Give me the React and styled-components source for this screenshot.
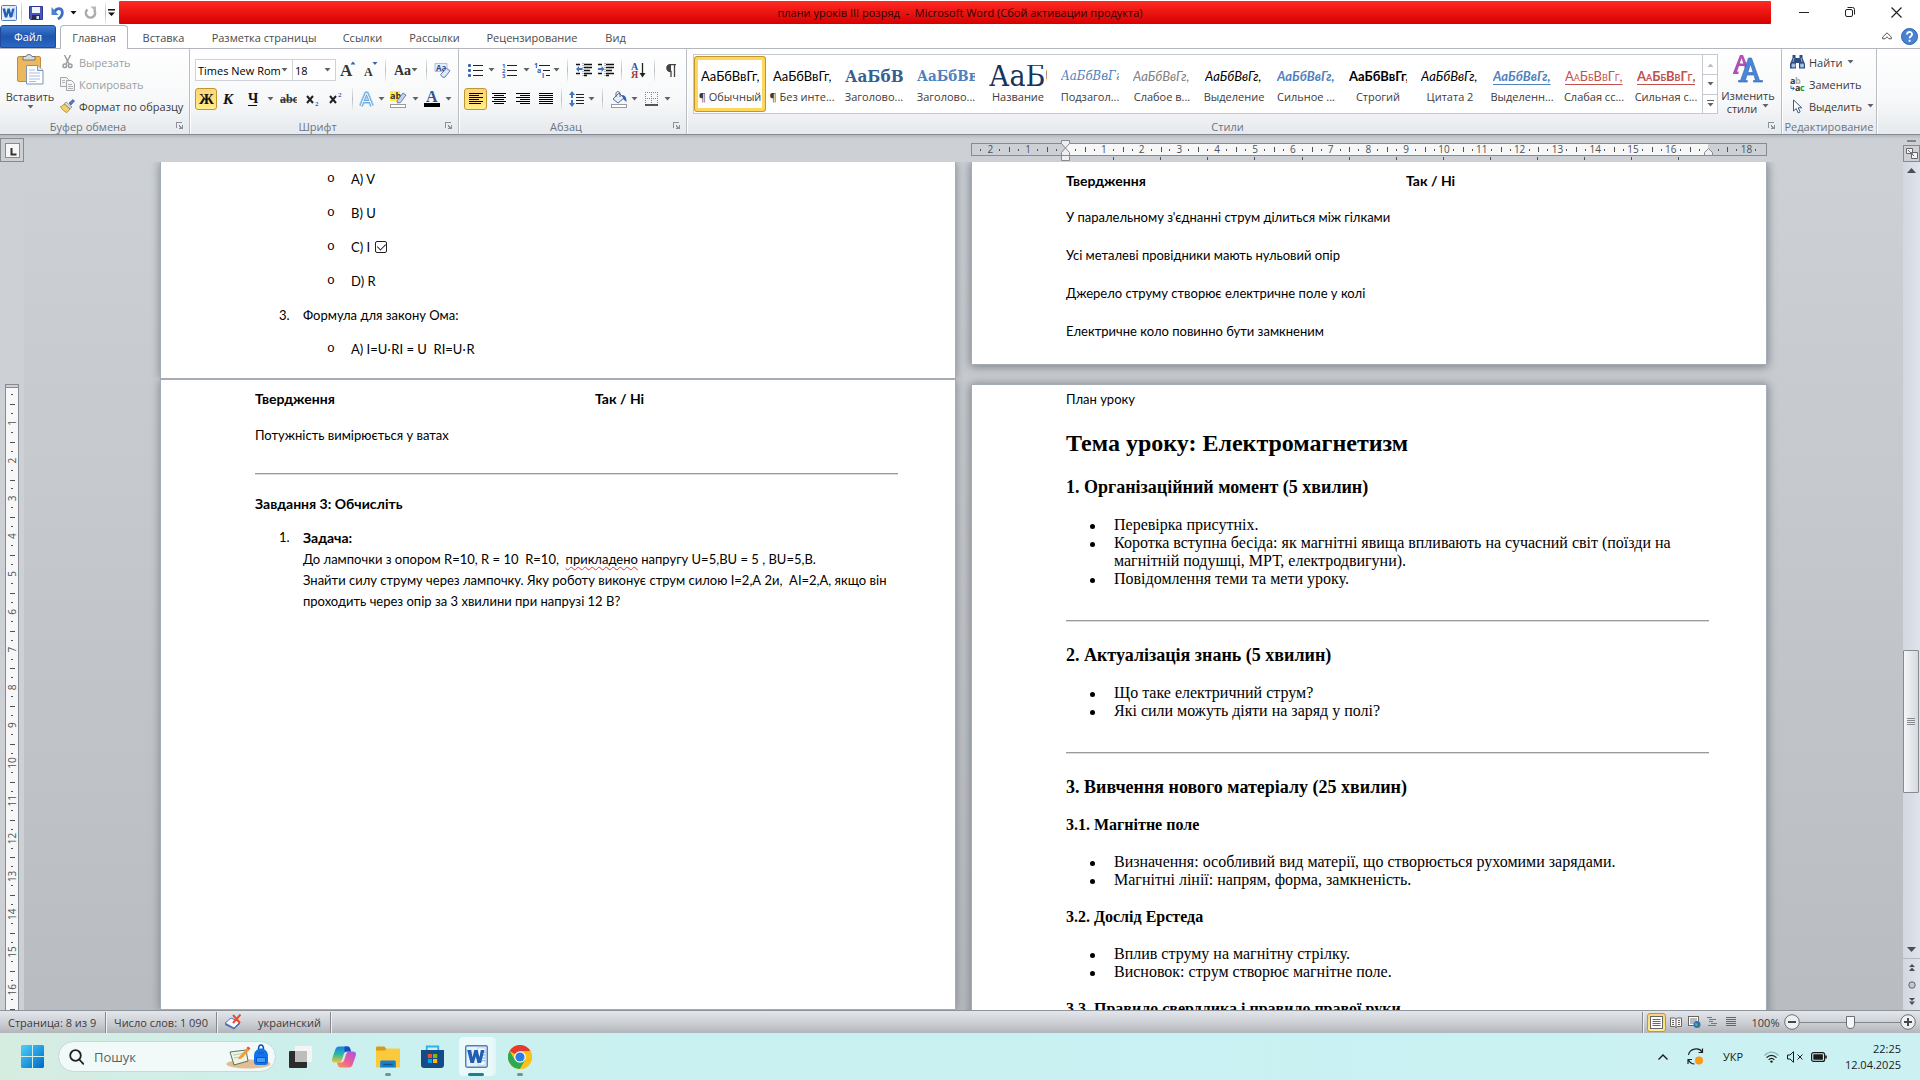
import React from 'react';
import styled, { createGlobalStyle, css } from 'styled-components';

const UI_FONT = '"Open Sans", "Noto Sans", sans-serif';
const BODY_FONT = 'Lato, "Open Sans", sans-serif';
const HEAD_FONT = '"DejaVu Serif Condensed", "DejaVu Serif", serif';

const GlobalStyle = createGlobalStyle`
  * {
    box-sizing: border-box;
  }

  body {
    margin: 0;
    overflow: hidden;
    font-family: ${UI_FONT};
    font-size: 11px;
    color: #3b3b3b;
  }

  button, select, input {
    margin: 0;
    padding: 0;
    border: 0;
    background: none;
    color: inherit;
    font: inherit;
  }

  svg {
    display: block;
    flex: none;
  }
`;

const Window = styled.div`
  display: flex;
  flex-direction: column;
  height: 100vh;
  background: #fff;
`;

/* ---------- small shared pieces ---------- */

const Caret = ({ color = '#5f6368' }) => (
  <svg width="7" height="4" viewBox="0 0 7 4">
    <path d="M0.5 0h6L3.5 3.6z" fill={color} />
  </svg>
);

const selected = css`
  border: 1px solid #c2962f;
  border-radius: 3px;
  background: linear-gradient(#fbd57a, #ffe27a 60%, #fff08c);
`;

const Tool = styled.button`
  display: flex;
  flex: none;
  align-items: center;
  justify-content: center;
  width: ${({ $w }) => $w}px;
  height: 22px;
  ${({ $on }) => $on && selected}
`;

const Divider = styled.span`
  display: flex;
  flex: none;
  justify-content: center;
  width: ${({ $w }) => $w}px;
  height: 22px;

  &::before {
    content: '';
    width: 1px;
    background: linear-gradient(#eceef0, #b9bdc3, #eceef0);
  }
`;

const Drop = () => (
  <Tool $w={9} aria-label="Ещё">
    <Caret />
  </Tool>
);

const Lines = ({ rows, w = 14, step = 2, color = '#000' }) => (
  <svg width={w} height={rows.length * step} shapeRendering="crispEdges">
    {rows.map(([x, len], i) => (
      <rect key={i} x={x} y={i * step} width={len} height="1" fill={color} />
    ))}
  </svg>
);

/* ---------- title bar ---------- */

const TitleBar = styled.header`
  display: flex;
  height: 24px;
  padding-top: 1px;
`;

const QuickAccess = styled.div`
  display: flex;
  align-items: center;
  width: 119px;
  padding: 0 1px;
`;

const Caption = styled.div`
  flex: 1;
  padding-left: 30px;
  border-radius: 1px;
  background: linear-gradient(#ff2a22, #d60000);
  color: #2b0505;
  line-height: 23px;
  text-align: center;
  white-space: pre;
`;

const WindowButtons = styled.div`
  display: flex;
  padding: 0 1px 0 10px;
`;

const WordLogo = ({ size = 16 }) => (
  <svg width={size} height={size} viewBox="0 0 16 16">
    <rect x="0.5" y="0.5" width="15" height="15" rx="1" fill="#e8f1fb" stroke="#4f7fc0" />
    <path d="M9 2h5v12H9z" fill="#fff" stroke="#a9c4e6" strokeWidth="0.5" />
    <path d="M11 5h3M11 7h3M11 9h3M11 11h3" stroke="#7ba4d8" strokeWidth="0.7" />
    <path
      d="M1.500 3.500h2.800l.9 5L6.500 3.500h2.300l1.200 5 1-5h2.500L11.200 12.500H8.700L7.500 8l-1.300 4.500H3.800z"
      fill="#1f5fb4"
    />
  </svg>
);

const TitleRow = () => (
  <TitleBar>
    <QuickAccess>
      <WordLogo />
      <Divider $w={9} />
      <Tool $w={20} aria-label="Сохранить">
        <svg width="14" height="14" viewBox="0 0 14 14">
          <path d="M0.5 0.5h13v13h-12l-1-1z" fill="#4a56c0" stroke="#2c3791" />
          <path d="M3 1h8v6H3z" fill="#f1f4fb" />
          <path d="M3 9h8v4.500H3z" fill="#262c50" />
          <path d="M7.500 10h2.500v3H7.500z" fill="#dfe3f2" />
        </svg>
      </Tool>
      <Tool $w={23} aria-label="Отменить">
        <svg width="14" height="14" viewBox="0 0 14 14">
          <path d="M3.500 6C5.500 1.500 11 1.500 11.300 6c.2 3.500-1.800 5.500-4.300 7" fill="none" stroke="#3f6fc4" strokeWidth="2.800" />
          <path d="M0.500 1v8h7z" fill="#4f80d2" />
        </svg>
      </Tool>
      <Tool $w={8} aria-label="Список отмены">
        <Caret color="#111" />
      </Tool>
      <Tool $w={26} aria-label="Повторить">
        <svg width="13" height="14" viewBox="0 0 13 14">
          <path d="M3.500 3.500A4.600 4.600 0 1 0 10 4" fill="none" stroke="#a8abb0" strokeWidth="2.500" />
          <path d="M6.500 0.500H12V6z" fill="#b4b7bb" />
        </svg>
      </Tool>
      <Divider $w={4} />
      <Tool $w={9} aria-label="Настройка панели">
        <svg width="7" height="8" viewBox="0 0 7 8">
          <path d="M0 0h7v1.500H0zM0 3.500h7L3.500 7z" fill="#111" />
        </svg>
      </Tool>
    </QuickAccess>
    <Caption>{'плани уроків III розряд  -  Microsoft Word (Сбой активации продукта)'}</Caption>
    <WindowButtons>
      <Tool $w={46} aria-label="Свернуть">
        <svg width="10" height="2"><path d="M0 1.500h10" stroke="#222" /></svg>
      </Tool>
      <Tool $w={46} aria-label="Свернуть в окно">
        <svg width="10" height="10" fill="none" stroke="#222">
          <rect x="0.5" y="2.5" width="7" height="7" rx="1.500" />
          <path d="M2.500 0.500H7.500a2 2 0 0 1 2 2V7.500" />
        </svg>
      </Tool>
      <Tool $w={46} aria-label="Закрыть">
        <svg width="11" height="11"><path d="M0.500 0.500l10 10M10.500 0.500l-10 10" stroke="#222" strokeWidth="1.200" /></svg>
      </Tool>
    </WindowButtons>
  </TitleBar>
);

/* ---------- tabs ---------- */

const TabBar = styled.nav`
  display: flex;
  height: 25px;
  padding-top: 1px;
  border-bottom: 1px solid #b2b7bd;
`;

const Tab = styled.button`
  width: ${({ $w }) => $w}px;
  height: 24px;
  color: #4b4b4b;
  text-align: center;
`;

const FileTab = styled(Tab)`
  height: 23px;
  margin-right: 4px;
  border: 1px solid #1f4a99;
  border-radius: 3px 3px 0 0;
  background: linear-gradient(#3f7cd4, #1f55ad 50%, #2b68c6);
  color: #fff;
`;

const ActiveTab = styled(Tab)`
  border: 1px solid #b2b7bd;
  border-bottom: 0;
  border-radius: 4px 4px 0 0;
  background: #fff;
`;

const TabSpace = styled.div`
  flex: 1;
`;

const TABS = [
  ['Вставка', 71],
  ['Разметка страницы', 130],
  ['Ссылки', 67],
  ['Рассылки', 77],
  ['Рецензирование', 118],
  ['Вид', 49],
];

const Tabs = () => (
  <TabBar>
    <FileTab $w={56}>Файл</FileTab>
    <ActiveTab $w={68}>Главная</ActiveTab>
    {TABS.map(([name, w]) => (
      <Tab key={name} $w={w}>{name}</Tab>
    ))}
    <TabSpace />
    <Tool $w={22} aria-label="Свернуть ленту">
      <svg width="10" height="8" viewBox="0 0 10 8" fill="none" stroke="#555">
        <path d="M0.700 5L5 0.800 9.300 5v1.800H7L5 4.800 3 6.800H0.700z" />
      </svg>
    </Tool>
    <Tool $w={22} aria-label="Справка">
      <svg width="17" height="17" viewBox="0 0 17 17">
        <circle cx="8.5" cy="8.5" r="8" fill="#4a82d2" stroke="#2f62ad" />
        <path d="M6 6.500c0-3.500 5.200-3.200 5 0-.1 1.800-2.400 1.800-2.400 3.800M8.600 11.700v2" fill="none" stroke="#fff" strokeWidth="1.900" />
      </svg>
    </Tool>
  </TabBar>
);

/* ---------- ribbon ---------- */

const Ribbon = styled.section`
  display: flex;
  height: 86px;
  border-bottom: 1px solid #868b92;
  background: linear-gradient(#fff, #f7f8f9 60%, #e6e9ed);
`;

const GroupBox = styled.div`
  display: flex;
  flex: none;
  flex-direction: column;
  width: ${({ $w }) => $w}px;
  border-right: 1px solid #b9bec5;
  box-shadow: 1px 0 0 #fff;
`;

const GroupBody = styled.div`
  display: flex;
  height: 69px;
`;

const GroupCaption = styled.div`
  display: flex;
  align-items: center;
  height: 16px;
  color: #6c7380;

  span {
    flex: 1;
    text-align: center;
  }

  button {
    width: 13px;
  }
`;

const Group = ({ name, width, launcher = true, children }) => (
  <GroupBox $w={width}>
    <GroupBody>{children}</GroupBody>
    <GroupCaption>
      <span>{name}</span>
      {launcher && (
        <button aria-label={`${name}: параметры`}>
          <svg width="8" height="8" viewBox="0 0 8 8" shapeRendering="crispEdges">
            <path d="M0 0h6v1H1v5H0zM3 3h1v1h1v1h1V3h1v4H3V6h1V5H3z" fill="#8b9098" />
          </svg>
        </button>
      )}
    </GroupCaption>
  </GroupBox>
);

const BigButton = styled.button`
  display: flex;
  flex: none;
  flex-direction: column;
  align-items: center;
  width: 60px;
  padding-top: 5px;
  line-height: 13px;

  svg:first-child {
    margin-bottom: 5px;
  }
`;

const CaretLabel = styled.span`
  display: flex;
  align-items: center;
  gap: 5px;
  height: 13px;
`;

const Stack = styled.div`
  display: flex;
  flex-direction: column;
  padding: 2px 0 0 ${({ $pad }) => $pad || 0}px;
`;

const SmallButton = styled.button`
  display: flex;
  align-items: center;
  gap: 4px;
  height: 22px;
  color: ${({ disabled }) => (disabled ? '#9c9fa3' : 'inherit')};
  white-space: nowrap;
`;

const IconSlot = styled.span`
  display: flex;
  justify-content: center;
  width: 15px;
`;

const Rows = styled.div`
  display: flex;
  flex-direction: column;
  gap: 7px;
  padding: 10px 0 0 5px;
`;

const ToolRow = styled.div`
  display: flex;
  align-items: center;
  height: 22px;
`;

const Combo = styled.label`
  display: flex;
  align-items: center;
  width: ${({ $w }) => $w}px;
  height: 22px;
  padding: 0 4px 0 2px;
  border: 1px solid #cfd3d8;
  background: #fff;
  color: #000;

  & + & {
    border-left: 0;
  }

  select {
    flex: 1;
    min-width: 0;
    appearance: none;
    outline: 0;
  }
`;

const Clipboard = () => (
  <Group name="Буфер обмена" width={190}>
    <BigButton>
      <svg width="27" height="31" viewBox="0 0 27 31">
        <rect x="0.5" y="2.5" width="23" height="25" rx="1.500" fill="#edb75e" stroke="#c58c34" />
        <path d="M6 6V2.500h3C9 0 15 0 15 2.500h3V6z" fill="#d9dde2" stroke="#6d747d" />
        <path d="M9.500 11.500h11l5.500 5V30H9.500z" fill="#fff" stroke="#7d94b8" />
        <path d="M20.500 11.500v5H26" fill="#dbe6f5" stroke="#7d94b8" />
        <path d="M12 16h6M12 19h11M12 22h11M12 25h11M12 27.500h7" stroke="#a9bcd8" />
      </svg>
      <span>Вставить</span>
      <CaretLabel><Caret /></CaretLabel>
    </BigButton>
    <Stack>
      <SmallButton disabled>
        <IconSlot>
          <svg width="11" height="14" viewBox="0 0 11 14" fill="none" stroke="#9a9da2" strokeWidth="1.500">
            <path d="M2.500 0l4.500 9M8.500 0L4 9" />
            <circle cx="2.800" cy="10.800" r="1.800" />
            <circle cx="8.200" cy="10.800" r="1.800" />
          </svg>
        </IconSlot>
        Вырезать
      </SmallButton>
      <SmallButton disabled>
        <IconSlot>
          <svg width="15" height="14" viewBox="0 0 15 14" fill="#f4f4f4" stroke="#a2a5aa">
            <path d="M0.500 0.500h6l2 2v7h-8z" />
            <path d="M6.500 3.500h5l3 3v7h-8z" />
            <path d="M8 7.500h4M8 9.500h5M8 11.500h5M2 3.500h3M2 5.500h3" strokeWidth="0.800" />
          </svg>
        </IconSlot>
        Копировать
      </SmallButton>
      <SmallButton>
        <IconSlot>
          <svg width="15" height="14" viewBox="0 0 15 14">
            <path d="M9 4l4-3.500L14.500 2 11 6z" fill="#5b78b8" stroke="#31487f" strokeWidth="0.600" />
            <path d="M6 3l6 5-2 2-6-5z" fill="#d6d9de" stroke="#6b6f78" strokeWidth="0.600" />
            <path d="M4 5l6 5-3 3.500C5 13 2 11 0.500 7.500 2 7.500 3 6.500 4 5z" fill="#f2d266" stroke="#96762a" strokeWidth="0.700" />
          </svg>
        </IconSlot>
        Формат по образцу
      </SmallButton>
    </Stack>
  </Group>
);

const SerifGlyph = ({ w, children }) => (
  <svg width={w} height="20" fontFamily="Liberation Serif, serif" fontWeight="bold" fill="#333">
    {children}
  </svg>
);

const FontGroup = () => (
  <Group name="Шрифт" width={269}>
    <Rows>
      <ToolRow>
        <Combo $w={98}>
          <select aria-label="Шрифт" defaultValue="Times New Rom">
            <option>Times New Rom</option>
            <option>Calibri</option>
          </select>
          <Caret />
        </Combo>
        <Combo $w={43}>
          <select aria-label="Размер шрифта" defaultValue="18">
            <option>18</option>
            <option>12</option>
          </select>
          <Caret />
        </Combo>
        <Tool $w={24} aria-label="Увеличить размер">
          <SerifGlyph w={16}>
            <text x="0" y="16" fontSize="17">A</text>
            <path d="M10.500 4.500h5L13 1.500z" fill="#3563b0" />
          </SerifGlyph>
        </Tool>
        <Tool $w={22} aria-label="Уменьшить размер">
          <SerifGlyph w={14}>
            <text x="0" y="16" fontSize="12">A</text>
            <path d="M8.500 2h5L11 5z" fill="#3563b0" />
          </SerifGlyph>
        </Tool>
        <Divider $w={6} />
        <Tool $w={35} aria-label="Регистр">
          <SerifGlyph w={17}>
            <text x="0" y="15" fontSize="14">Aa</text>
          </SerifGlyph>
          <Caret />
        </Tool>
        <Divider $w={6} />
        <Tool $w={27} aria-label="Очистить формат">
          <svg width="17" height="17" viewBox="0 0 17 17">
            <path d="M1 1.500h12v8H1z" fill="#e9f0fa" stroke="#8fa9d2" strokeWidth="0.700" />
            <text x="2" y="8.500" fontSize="8" fontWeight="bold" fill="#2b4f93">Aa</text>
            <path d="M6.500 12.500l6-6 3.500 2.200-5 6.500H8.500z" fill="#dfe8f5" stroke="#5c7fb9" />
          </svg>
        </Tool>
      </ToolRow>
      <ToolRow>
        <Tool $w={22} $on aria-label="Полужирный">
          <SerifGlyph w={16}><text x="1" y="15" fontSize="15" fill="#111">Ж</text></SerifGlyph>
        </Tool>
        <Tool $w={24} aria-label="Курсив">
          <SerifGlyph w={14}><text x="1" y="15" fontSize="15" fontStyle="italic" fill="#111">К</text></SerifGlyph>
        </Tool>
        <Tool $w={24} aria-label="Подчеркнутый">
          <SerifGlyph w={12}>
            <text x="1" y="14" fontSize="14" fill="#111">Ч</text>
            <path d="M1 16.500h9" stroke="#111" />
          </SerifGlyph>
        </Tool>
        <Tool $w={11} aria-label="Вид подчеркивания"><Caret /></Tool>
        <Tool $w={25} aria-label="Зачеркнутый">
          <SerifGlyph w={17}>
            <text x="0" y="14" fontSize="12">abc</text>
            <path d="M0 11h17" stroke="#333" />
          </SerifGlyph>
        </Tool>
        <Tool $w={23} aria-label="Подстрочный">
          <SerifGlyph w={14}>
            <path d="M1 7l6 7M7 7l-6 7" stroke="#222" strokeWidth="2" />
            <text x="9" y="17" fontSize="7" fill="#2f62b5">2</text>
          </SerifGlyph>
        </Tool>
        <Tool $w={24} aria-label="Надстрочный">
          <SerifGlyph w={14}>
            <path d="M1 7l6 7M7 7l-6 7" stroke="#222" strokeWidth="2" />
            <text x="9" y="8" fontSize="7" fill="#2f62b5">2</text>
          </SerifGlyph>
        </Tool>
        <Divider $w={8} />
        <Tool $w={21} aria-label="Текстовые эффекты">
          <svg width="17" height="17" viewBox="0 0 17 17" fill="none" strokeLinejoin="round">
            <path d="M3 15L8 2.500h1L14 15M5 10.500h7" stroke="#a5cdee" strokeWidth="4.500" />
            <path d="M3 15L8 2.500h1L14 15M5 10.500h7" stroke="#5a9fd8" strokeWidth="2.600" />
            <path d="M3 15L8 2.500h1L14 15M5 10.500h7" stroke="#eaf5fd" strokeWidth="1.200" />
          </svg>
        </Tool>
        <Drop />
        <Tool $w={25} aria-label="Цвет выделения">
          <svg width="17" height="17" viewBox="0 0 17 17">
            <rect x="0" y="0" width="10" height="10" fill="#ffee3d" />
            <text x="0" y="8" fontSize="9" fontWeight="bold" fill="#333">ab</text>
            <path d="M7 10l6-8 3 2-5.500 7.500-3 .5z" fill="#c8d4e8" stroke="#51688f" strokeWidth="0.800" />
            <rect x="0.500" y="13.500" width="15" height="3" fill="#fff" stroke="#9a9a9a" />
          </svg>
        </Tool>
        <Drop />
        <Tool $w={24} aria-label="Цвет текста">
          <SerifGlyph w={16}>
            <text x="2" y="13" fontSize="16" fill="#2f5597">A</text>
            <rect x="0" y="14" width="16" height="4" fill="#000" />
          </SerifGlyph>
        </Tool>
        <Drop />
      </ToolRow>
    </Rows>
  </Group>
);

const ListIcon = ({ marks }) => (
  <svg width="15" height="15" viewBox="0 0 15 15">
    {[2, 7, 12].map((y, i) => (
      <g key={y}>
        {marks ? (
          <text x="0" y={y + 3} fontSize="6" fontWeight="bold" fill="#2f5fb8">{marks[i]}</text>
        ) : (
          <rect x="0" y={y - 1} width="3" height="3" rx="1" fill="#3563b8" />
        )}
        <rect x="5" y={y} width="10" height="1" fill="#222" />
      </g>
    ))}
  </svg>
);

const IndentIcon = ({ flip }) => (
  <svg width="16" height="14" viewBox="0 0 16 14">
    <path d="M0 1.500h4M8 1.500h8M8 4.500h8M8 7.500h6M0 10.500h4M8 10.500h8M8 12.500h3" stroke="#111" strokeWidth="1.400" />
    <path d={flip ? 'M6.500 6L3.500 3v2H0v2h3.500v2z' : 'M0 6l3-3v2h3.500v2H3v2z'} fill="#3f74c8" />
    <path d="M7 0v14" stroke="#777" strokeDasharray="1 1" />
  </svg>
);

const LEFT = [[0, 14], [0, 10], [0, 14], [0, 10], [0, 14], [0, 12]];
const CENTER = [[0, 14], [2, 10], [0, 14], [2, 10], [0, 14], [2, 10]];
const RIGHT = [[0, 14], [4, 10], [0, 14], [4, 10], [0, 14], [4, 10]];
const FULL = [[0, 14], [0, 14], [0, 14], [0, 14], [0, 14], [0, 14]];

const ParagraphGroup = () => (
  <Group name="Абзац" width={228}>
    <Rows>
      <ToolRow>
        <Tool $w={23} aria-label="Маркеры"><ListIcon /></Tool>
        <Drop />
        <Tool $w={26} aria-label="Нумерация"><ListIcon marks={['1', '2', '3']} /></Tool>
        <Drop />
        <Tool $w={21} aria-label="Многоуровневый список">
          <svg width="16" height="15" viewBox="0 0 16 15" fontSize="7" fontWeight="bold" fill="#2f5fb8">
            <text x="0" y="5">1</text>
            <text x="3" y="10">a</text>
            <text x="8" y="15">i</text>
            <path d="M5 2.500h11M9 7.500h7M12 12.500h4" stroke="#222" />
          </svg>
        </Tool>
        <Drop />
        <Divider $w={12} />
        <Tool $w={22} aria-label="Уменьшить отступ"><IndentIcon /></Tool>
        <Tool $w={22} aria-label="Увеличить отступ"><IndentIcon flip /></Tool>
        <Divider $w={9} />
        <Tool $w={24} aria-label="Сортировка">
          <svg width="15" height="17" viewBox="0 0 15 17" fontFamily="Liberation Serif, serif" fontSize="10" fontWeight="bold">
            <text x="0" y="8" fill="#2f5597">А</text>
            <text x="0" y="16" fill="#a03a3a">Я</text>
            <path d="M11.500 1v12" stroke="#222" strokeWidth="1.300" />
            <path d="M8.500 11h6l-3 4.500z" fill="#222" />
          </svg>
        </Tool>
        <Divider $w={8} />
        <Tool $w={26} aria-label="Непечатаемые знаки">
          <svg width="10" height="13" viewBox="0 0 10 13">
            <path d="M10 0.500H4.500a3.500 3.500 0 0 0 0 7H5V13M8.500 0.500V13" fill="none" stroke="#444" strokeWidth="1.300" />
            <path d="M5 0.500H4a3.500 3.500 0 0 0 0 7h1z" fill="#444" />
          </svg>
        </Tool>
      </ToolRow>
      <ToolRow>
        <Tool $w={23} $on aria-label="По левому краю"><Lines rows={LEFT} /></Tool>
        <Tool $w={24} aria-label="По центру"><Lines rows={CENTER} /></Tool>
        <Tool $w={24} aria-label="По правому краю"><Lines rows={RIGHT} /></Tool>
        <Tool $w={22} aria-label="По ширине"><Lines rows={FULL} /></Tool>
        <Divider $w={9} />
        <Tool $w={21} aria-label="Интервал">
          <svg width="15" height="16" viewBox="0 0 15 16">
            <path d="M3 0l3 4H4v3H2V4H0zM3 16l3-4H4V9H2v3H0z" fill="#3f74c8" />
            <path d="M7 3.500h8M7 6.500h8M7 9.500h8M7 12.500h8" stroke="#222" />
          </svg>
        </Tool>
        <Drop />
        <Divider $w={12} />
        <Tool $w={22} aria-label="Заливка">
          <svg width="16" height="17" viewBox="0 0 16 17">
            <path d="M2 8l6-6 5 5-6 5z" fill="#e6edf8" stroke="#4a6ea8" />
            <path d="M5 6V2.500C5 0 9 0 9 2.500V6" fill="none" stroke="#4a5c7c" />
            <path d="M11 4c3 0 4.500 2 4.500 7l-3-2.500z" fill="#3563b0" />
            <rect x="0.500" y="13.500" width="15" height="3" fill="#fff" stroke="#9a9a9a" />
          </svg>
        </Tool>
        <Drop />
        <Tool $w={24} aria-label="Границы">
          <svg width="13" height="14" viewBox="0 0 13 14">
            <path d="M0 0.500h13M0 6.500h13M0.500 0v13M6.500 0v13M12.500 0v13" stroke="#888" strokeDasharray="1 1" />
            <path d="M0 13h13" stroke="#222" strokeWidth="1.500" />
          </svg>
        </Tool>
        <Drop />
      </ToolRow>
    </Rows>
  </Group>
);

const Gallery = styled.div`
  display: flex;
  flex: none;
  height: 60px;
  margin: 5px 0 0 6px;
  border: 1px solid #c6cad0;
  background: #fff;
`;

const StyleCard = styled.button`
  display: flex;
  flex-direction: column;
  align-items: center;
  width: 72px;
  height: 56px;
  margin-top: 1px;
  padding-top: 5px;
  border: 4px solid transparent;
  white-space: nowrap;

  ${({ $on }) =>
    $on &&
    css`
      border: 4px solid #ffd65c;
      border-radius: 3px;
      outline: 1px solid #c2962f;
      outline-offset: -1px;
    `}
`;

const Sample = styled.span`
  width: 58px;
  height: 24px;
  overflow: hidden;
  color: ${({ $color }) => $color || '#000'};
  font-family: ${({ $head }) => ($head ? HEAD_FONT : BODY_FONT)};
  font-size: ${({ $size }) => $size || 13}px;
  font-style: ${({ $italic }) => ($italic ? 'italic' : 'normal')};
  font-weight: ${({ $bold }) => ($bold ? 700 : 400)};
  font-variant: ${({ $caps }) => ($caps ? 'small-caps' : 'normal')};
  line-height: 22px;
  text-align: left;
  text-decoration: ${({ $line }) => ($line ? 'underline' : 'none')};
  text-underline-offset: 3px;
`;

const StyleName = styled.span`
  line-height: 16px;
`;

const STYLES = [
  { name: '¶ Обычный', on: true },
  { name: '¶ Без инте...' },
  { name: 'Заголово...', head: true, bold: true, size: 17, color: '#365f91' },
  { name: 'Заголово...', head: true, bold: true, size: 15, color: '#4f81bd' },
  { name: 'Название', head: true, size: 30, color: '#17365d' },
  { name: 'Подзагол...', head: true, italic: true, color: '#4f81bd' },
  { name: 'Слабое в...', italic: true, color: '#808080' },
  { name: 'Выделение', italic: true },
  { name: 'Сильное ...', italic: true, bold: true, color: '#4f81bd' },
  { name: 'Строгий', bold: true },
  { name: 'Цитата 2', italic: true },
  { name: 'Выделенн...', italic: true, bold: true, line: true, color: '#4f81bd' },
  { name: 'Слабая сс...', caps: true, line: true, color: '#c0504d' },
  { name: 'Сильная с...', caps: true, bold: true, line: true, color: '#c0504d' },
];

const GalleryScroll = styled.div`
  display: grid;
  grid-template-rows: 1fr 1fr 1fr;
  width: 15px;
  border-left: 1px solid #c6cad0;

  button {
    display: flex;
    align-items: center;
    justify-content: center;
  }

  button + button {
    border-top: 1px solid #c6cad0;
  }
`;

const StylesGroup = () => (
  <Group name="Стили" width={1095}>
    <Gallery>
      {STYLES.map((s, i) => (
        <StyleCard key={i} $on={s.on}>
          <Sample
            $head={s.head}
            $bold={s.bold}
            $italic={s.italic}
            $caps={s.caps}
            $line={s.line}
            $size={s.size}
            $color={s.color}
          >
            АаБбВвГг,
          </Sample>
          <StyleName>{s.name}</StyleName>
        </StyleCard>
      ))}
      <GalleryScroll>
        <button aria-label="Вверх">
          <svg width="7" height="4"><path d="M0.500 4h6L3.500 0.400z" fill="#b9bdc2" /></svg>
        </button>
        <button aria-label="Вниз"><Caret /></button>
        <button aria-label="Все стили">
          <svg width="7" height="7"><path d="M0 0h7v1H0zM0.500 3h6L3.500 6.600z" fill="#5f6368" /></svg>
        </button>
      </GalleryScroll>
    </Gallery>
    <BigButton>
      <svg width="30" height="30" viewBox="0 0 30 30">
        <path d="M0 19L7 1h3l6 15h-3.500l-1.300-4H6l-2 5.500h1.500V20H0zM6.800 9.500h3.600L8.500 4z" fill="#b14fb6" />
        <path d="M5.500 28v-1.500h2L15.500 4h3l8 22.500h3V28h-9v-1.500h2L21 21h-7l-1.700 5.500h2V28zM14.800 18.500h5.400L17.500 10z" fill="#4b86d8" stroke="#2d5fae" strokeWidth="0.600" />
      </svg>
      <span>Изменить</span>
      <CaretLabel>стили <Caret /></CaretLabel>
    </BigButton>
  </Group>
);

const EditGroup = () => (
  <Group name="Редактирование" width={95} launcher={false}>
    <Stack $pad={8}>
      <SmallButton>
        <svg width="15" height="14" viewBox="0 0 15 14">
          <path d="M2.500 0h3v3h4V0h3v3l2.500 6v4.500H9V8H6v5.500H0V9l2.500-6z" fill="#2f4d80" />
          <path d="M2 9h3v3H2zM10.500 9h3v3h-3zM4 3l-1 4M11 3l1 4" fill="#b8cdec" stroke="#8fb0de" />
        </svg>
        <CaretLabel>Найти <Caret /></CaretLabel>
      </SmallButton>
      <SmallButton>
        <svg width="15" height="15" viewBox="0 0 15 15" fontSize="9" fontWeight="bold">
          <text x="0" y="7" fill="#333">a</text>
          <text x="5" y="7" fill="#aaa">b</text>
          <text x="5" y="14" fill="#333">a</text>
          <text x="10" y="14" fill="#2a8c3c">c</text>
          <path d="M1 8.500v3h3M2.500 10l2 1.500-2 1.500" fill="none" stroke="#3563b0" />
        </svg>
        Заменить
      </SmallButton>
      <SmallButton>
        <svg width="15" height="15" viewBox="0 0 15 15">
          <path d="M3.500 1v11l2.700-2.500 2 4.500 2-1-2-4.200h3.600z" fill="#fff" stroke="#3c5a8c" />
        </svg>
        <CaretLabel>Выделить <Caret /></CaretLabel>
      </SmallButton>
    </Stack>
  </Group>
);

/* ---------- rulers ---------- */

const CM = 37.8;

const RulerBar = styled.div`
  display: flex;
  height: 27px;
  background: #cdd1d6;
  box-shadow: inset 0 3px 3px -1px #b3b8be;
`;

const Corner = styled.button`
  display: flex;
  align-items: center;
  justify-content: center;
  width: 24px;
  height: 24px;
  margin-top: 3px;
  border: 1px solid #868b92;

  svg {
    border: 1px solid #868b92;
    background: #f7f7f8;
  }
`;

const Sheets = styled.div`
  display: flex;
  flex: 1;
  justify-content: center;
  gap: 15px;
  min-width: 0;
  overflow: hidden;
`;

const SheetWidth = styled.div`
  width: 796px;
`;

const range = (from, to) => Array.from({ length: to - from + 1 }, (_, i) => from + i);

const HorizontalRuler = () => (
  <svg width="796" height="27" fontSize="10" fill="#4c5258" textAnchor="middle">
    <rect x="0.500" y="8.500" width="795" height="12" fill="#cdd1d6" stroke="#868b92" />
    <rect x="95" y="9" width="642" height="11" fill="#f7f7f8" />
    {range(-2, 18).map((n) => {
      const x = 95 + n * CM;
      return (
        <g key={n}>
          {n !== 0 && n !== 17 && <text x={x} y="18">{Math.abs(n)}</text>}
          <rect x={Math.round(x - 10)} y="14" width="1" height="2" />
          <rect x={Math.round(x + 9)} y="14" width="1" height="2" />
          {n !== 18 && <rect x={Math.round(x + CM / 2)} y="12" width="1" height="5" />}
        </g>
      );
    })}
    {range(1, 13).map((n) => (
      <rect key={n} x={Math.round(95 + n * 47.1)} y="22" width="1" height="3" />
    ))}
    <g fill="#f0f0f0" stroke="#868b92">
      <path d="M90.500 5.500h8v3l-4 4.500-4-4.500zM94.500 13l4 4.500v3h-8v-3zM90.500 20.500h8v5h-8z" />
      <path d="M737.500 13.500l4 4v3h-8v-3z" />
    </g>
  </svg>
);

const SideRuler = styled.div`
  width: 24px;
  overflow: hidden;
  background: #cdd1d6;
`;

const VerticalRuler = () => (
  <svg width="24" height="860" fontSize="10" fill="#4c5258" textAnchor="middle">
    <rect x="5.500" y="222.500" width="13" height="640" fill="#f7f7f8" stroke="#868b92" />
    <rect x="5.500" y="222.500" width="13" height="3" fill="#cdd1d6" stroke="#868b92" />
    {range(0, 16).map((n) => {
      const y = 223 + n * CM;
      return (
        <g key={n}>
          {n > 0 && <text transform={`translate(16 ${y}) rotate(-90)`}>{n}</text>}
          {n > 0 && <rect x="11" y={Math.round(y - 10)} width="2" height="1" />}
          <rect x="11" y={Math.round(y + 9)} width="2" height="1" />
          <rect x="10" y={Math.round(y + CM / 2)} width="5" height="1" />
        </g>
      );
    })}
  </svg>
);

/* ---------- document ---------- */

const Workspace = styled.main`
  display: flex;
  flex: 1;
  min-height: 0;
  overflow: hidden;
  background: linear-gradient(#cdd1d6, #b9bcc0);
`;

const Column = styled.div`
  display: flex;
  flex-direction: column;
  width: 796px;
  gap: ${({ $gap }) => $gap || 0}px;
`;

const Page = styled.article`
  flex: ${({ $grow }) => ($grow ? '1 0 auto' : 'none')};
  padding: 0 57px 12px 94px;
  border: 1px solid #a4acb6;
  border-top-width: ${({ $first }) => ($first ? 0 : 1)}px;
  background: #fff;
  box-shadow: 0 ${({ $flat }) => ($flat ? 0 : 1)}px 9px ${({ $flat }) => ($flat ? 0 : 1)}px #7f8388;
  clip-path: ${({ $flat }) => ($flat ? 'inset(0 -16px)' : 'none')};
  color: #000;
  font-family: ${BODY_FONT};
  font-size: 13px;
  line-height: 21px;
  white-space: nowrap;

  strong, th {
    font-size: 14px;
  }
`;

const Answers = styled.ul`
  margin: 0;
  padding: 0 0 0 72px;
  list-style: none;
  line-height: 34px;

  li {
    display: flex;
    align-items: center;
    height: 34px;
  }

  li::before {
    content: 'o';
    width: 24px;
    font-family: "Liberation Mono", monospace;
  }
`;

const CheckedAnswer = styled.label`
  display: flex;
  align-items: center;
  gap: 5px;

  input {
    display: grid;
    place-content: center;
    appearance: none;
    width: 12px;
    height: 12px;
    border: 1px solid #222;
    border-radius: 2px;
  }

  input:checked::after {
    content: '';
    width: 4px;
    height: 7px;
    margin-bottom: 2px;
    border: solid #222;
    border-width: 0 1px 1px 0;
    transform: rotate(45deg);
  }
`;

const Numbered = styled.div`
  display: flex;
  padding-left: 24px;
  line-height: ${({ $tall }) => ($tall ? 34 : 21)}px;
  margin-top: ${({ $tall }) => ($tall ? 0 : 6)}px;

  > span {
    flex: none;
    width: 24px;
  }

  p {
    margin: 0;
  }
`;

const Facts = styled.table`
  width: 100%;
  margin-bottom: 2px;
  border-collapse: collapse;
  table-layout: fixed;

  th, td {
    height: 38px;
    padding: 0;
    text-align: left;
  }

  th {
    height: 36px;
  }

  th:first-child {
    width: 340px;
  }
`;

const Rule = styled.hr`
  height: 2px;
  margin: ${({ $top }) => $top}px 0 0;
  border: 0;
  border-top: 1px solid #9b9b9b;
  border-bottom: 1px solid #dcdcdc;
`;

const TaskTitle = styled.h4`
  margin: 12px 0 0;
  font-size: 14px;
  line-height: 34px;
`;

const Misspelled = styled.span`
  text-decoration: underline wavy #e0302a 1px;
  text-underline-offset: 2px;
`;

const Lead = styled.p`
  margin: 0;
  line-height: 29px;
`;

const Serif = css`
  font-family: "Liberation Serif", serif;
`;

const Topic = styled.h1`
  ${Serif}
  margin: 11px 0 0;
  font-size: 24px;
  line-height: 36px;
`;

const Section = styled.h2`
  ${Serif}
  margin: ${({ $top }) => $top || 21}px 0 0;
  font-size: 18px;
  line-height: 24px;
`;

const Subsection = styled.h3`
  ${Serif}
  margin: 18px 0 0;
  font-size: 16px;
  line-height: 20px;

  h2 + & {
    margin-top: 16px;
  }
`;

const Points = styled.ul`
  ${Serif}
  margin: 17px 0 0;
  padding-left: 48px;
  font-size: 16px;
  line-height: 18px;
  list-style: none;
  white-space: normal;

  h3 + & {
    margin-top: 18px;
  }

  li {
    position: relative;
  }

  li::before {
    content: '';
    position: absolute;
    top: 8px;
    left: -24px;
    width: 5px;
    height: 5px;
    border-radius: 50%;
    background: #000;
  }
`;

const LeftColumn = () => (
  <Column>
    <Page $first $flat>
      <Answers>
        <li>A) V</li>
        <li>B) U</li>
        <li><CheckedAnswer>C) I <input type="checkbox" defaultChecked /></CheckedAnswer></li>
        <li>D) R</li>
      </Answers>
      <Numbered $tall><span>3.</span><p>Формула для закону Ома:</p></Numbered>
      <Answers>
        <li>A) I=U⋅RI = U &nbsp;RI=U⋅R</li>
      </Answers>
    </Page>
    <Page $grow $flat>
      <Facts>
        <thead>
          <tr><th>Твердження</th><th>Так / Ні</th></tr>
        </thead>
        <tbody>
          <tr><td>Потужність вимірюється у ватах</td><td /></tr>
        </tbody>
      </Facts>
      <Rule $top={19} />
      <TaskTitle>Завдання 3: Обчисліть</TaskTitle>
      <Numbered>
        <span>1.</span>
        <p>
          <strong>Задача:</strong>
          <br />
          До лампочки з опором R=10, R = 10 &nbsp;R=10, &nbsp;<Misspelled>прикладено</Misspelled> напругу U=5,BU = 5 , BU=5,В.
          <br />
          Знайти силу струму через лампочку. Яку роботу виконує струм силою I=2,А 2и, &nbsp;AI=2,А, якщо він
          <br />
          проходить через опір за 3 хвилини при напрузі 12 В?
        </p>
      </Numbered>
    </Page>
  </Column>
);

const RightColumn = () => (
  <Column $gap={19}>
    <Page $first>
      <Facts>
        <thead>
          <tr><th>Твердження</th><th>Так / Ні</th></tr>
        </thead>
        <tbody>
          <tr><td>У паралельному з'єднанні струм ділиться між гілками</td><td /></tr>
          <tr><td>Усі металеві провідники мають нульовий опір</td><td /></tr>
          <tr><td>Джерело струму створює електричне поле у колі</td><td /></tr>
          <tr><td>Електричне коло повинно бути замкненим</td><td /></tr>
        </tbody>
      </Facts>
    </Page>
    <Page $grow>
      <Lead>План уроку</Lead>
      <Topic>Тема уроку: Електромагнетизм</Topic>
      <Section $top={14}>1. Організаційний момент (5 хвилин)</Section>
      <Points>
        <li>Перевірка присутніх.</li>
        <li>Коротка вступна бесіда: як магнітні явища впливають на сучасний світ (поїзди на магнітній подушці, МРТ, електродвигуни).</li>
        <li>Повідомлення теми та мети уроку.</li>
      </Points>
      <Rule $top={32} />
      <Section>2. Актуалізація знань (5 хвилин)</Section>
      <Points>
        <li>Що таке електричний струм?</li>
        <li>Які сили можуть діяти на заряд у полі?</li>
      </Points>
      <Rule $top={32} />
      <Section>3. Вивчення нового матеріалу (25 хвилин)</Section>
      <Subsection>3.1. Магнітне поле</Subsection>
      <Points>
        <li>Визначення: особливий вид матерії, що створюється рухомими зарядами.</li>
        <li>Магнітні лінії: напрям, форма, замкненість.</li>
      </Points>
      <Subsection>3.2. Дослід Ерстеда</Subsection>
      <Points>
        <li>Вплив струму на магнітну стрілку.</li>
        <li>Висновок: струм створює магнітне поле.</li>
      </Points>
      <Subsection>3.3. Правило свердлика і правило правої руки</Subsection>
    </Page>
  </Column>
);

/* ---------- scroll bar ---------- */

const ScrollTop = styled.div`
  display: flex;
  flex-direction: column;
  align-items: center;
  justify-content: flex-end;
  gap: 3px;
  width: 17px;

  &::before {
    content: '';
    width: 9px;
    height: 2px;
    background: #7f858c;
  }

  button {
    display: flex;
    align-items: center;
    justify-content: center;
    width: 17px;
    height: 17px;
    border: 1px solid #868b92;
  }
`;

const ScrollBar = styled.div`
  display: flex;
  flex-direction: column;
  width: 17px;
  background: linear-gradient(90deg, #d3d8e0, #dfe3ec);
`;

const ScrollButton = styled.button`
  display: flex;
  align-items: center;
  justify-content: center;
  height: 17px;
`;

const ScrollTrack = styled.div`
  display: flex;
  flex: 1;
  flex-direction: column;

  &::before {
    content: '';
    flex: 472;
  }

  &::after {
    content: '';
    flex: 148;
  }
`;

const ScrollThumb = styled.div`
  display: flex;
  flex: 142;
  align-items: center;
  justify-content: center;
  margin-right: 1px;
  border: 1px solid #868b92;
  border-radius: 1px;
  background: linear-gradient(90deg, #f5f6f8, #d5d9de);
`;

const BrowseButtons = styled.div`
  border-top: 1px solid #b5bac2;

  button {
    width: 17px;
  }
`;

const Scroll = () => (
  <ScrollBar>
    <ScrollButton aria-label="Прокрутить вверх">
      <svg width="9" height="5"><path d="M0 5h9L4.500 0z" fill="#4a4e54" /></svg>
    </ScrollButton>
    <ScrollTrack>
      <ScrollThumb>
        <Lines rows={[[0, 8], [0, 8], [0, 8], [0, 8]]} w={8} color="#868b92" />
      </ScrollThumb>
    </ScrollTrack>
    <ScrollButton aria-label="Прокрутить вниз">
      <svg width="9" height="5"><path d="M0 0h9L4.500 5z" fill="#4a4e54" /></svg>
    </ScrollButton>
    <BrowseButtons>
      <ScrollButton aria-label="Предыдущая страница">
        <svg width="6" height="7"><path d="M0 3h6L3 0zM0 7h6L3 3.500z" fill="#4a4e54" /></svg>
      </ScrollButton>
      <ScrollButton aria-label="Выбор объекта">
        <svg width="8" height="8"><circle cx="4" cy="4" r="3.200" fill="#c5c9cf" stroke="#5f646b" /></svg>
      </ScrollButton>
      <ScrollButton aria-label="Следующая страница">
        <svg width="6" height="7"><path d="M0 0h6L3 3zM0 3.500h6L3 7z" fill="#4a4e54" /></svg>
      </ScrollButton>
    </BrowseButtons>
  </ScrollBar>
);

/* ---------- status bar ---------- */

const StatusBar = styled.footer`
  display: flex;
  align-items: center;
  height: 23px;
  border-top: 1px solid #8e949c;
  background: linear-gradient(#e3e6ea, #c9cdd2 60%, #b2b6bb);
`;

const StatusItem = styled.button`
  display: flex;
  flex: none;
  align-items: center;
  gap: ${({ $gap }) => $gap || 0}px;
  width: ${({ $w }) => $w}px;
  height: 21px;
  padding-left: 8px;
  border-right: 1px solid #85898f;
  box-shadow: 1px 0 0 #eef0f2;
  white-space: nowrap;
`;

const StatusSpace = styled.div`
  flex: 1;
  height: 21px;
  border-right: 1px solid #85898f;
  box-shadow: 1px 0 0 #eef0f2;
`;

const ViewButtons = styled.div`
  display: flex;
  align-items: center;
  padding-left: 4px;

  button {
    height: 19px;
  }
`;

const Zoom = styled.label`
  display: flex;
  align-items: center;
  padding: 0 4px 0 7px;

  > span {
    width: 37px;
    text-align: center;
  }

  input {
    width: 100px;
    height: 16px;
    appearance: none;
    background: linear-gradient(#7f858d, #7f858d) center / 100% 1px no-repeat;
  }

  input::-webkit-slider-thumb {
    appearance: none;
    width: 9px;
    height: 13px;
    border: 1px solid #6b7076;
    border-radius: 1px 1px 5px 5px;
    background: #f6f7f8;
  }
`;

const RoundButton = styled.button`
  width: 16px;
  height: 16px;
`;

const RoundIcon = ({ plus }) => (
  <svg width="16" height="16" viewBox="0 0 16 16">
    <circle cx="8" cy="8" r="7.300" fill="#eff0f2" stroke="#6b7076" />
    <path d={plus ? 'M4 8h8M8 4v8' : 'M4 8h8'} stroke="#44484d" strokeWidth="2" />
  </svg>
);

const Status = () => (
  <StatusBar>
    <StatusItem $w={106}>Страница: 8 из 9</StatusItem>
    <StatusItem $w={111}>Число слов: 1 090</StatusItem>
    <StatusItem $w={114} $gap={16}>
      <svg width="17" height="16" viewBox="0 0 17 16">
        <path d="M0 9l6-5 9 4-6 6z" fill="#f4f6fa" stroke="#5b78b0" />
        <path d="M0 9v2l9 4.500 6-5.500V8l-6 6z" fill="#4b74b8" />
        <path d="M8 1l7 8M15.500 0.500L8 9" stroke="#ee4b2e" strokeWidth="2" />
      </svg>
      украинский
    </StatusItem>
    <StatusSpace />
    <ViewButtons>
      <Tool $w={19} $on aria-label="Разметка страницы">
        <svg width="13" height="13" viewBox="0 0 13 13">
          <rect x="0.500" y="0.500" width="12" height="12" fill="#fff" stroke="#666" />
          <path d="M2.500 3.500h8M2.500 5.500h8M2.500 7.500h8M2.500 9.500h8" stroke="#666" />
        </svg>
      </Tool>
      <Tool $w={19} aria-label="Режим чтения">
        <svg width="12" height="11" viewBox="0 0 12 11" fill="#f7f7f7" stroke="#666">
          <path d="M0.500 1h4L6 2l1.500-1h4v8.500h-4L6 10.500l-1.500-1h-4zM6 2v8.500M2 3.500h2M2 5.500h2M2 7.500h2M8 3.500h2M8 5.500h2M8 7.500h2" />
        </svg>
      </Tool>
      <Tool $w={18} aria-label="Веб-документ">
        <svg width="13" height="12" viewBox="0 0 13 12">
          <rect x="0.500" y="0.500" width="10" height="9" fill="#fff" stroke="#666" />
          <path d="M2 3h7M2 5h7M2 7h4" stroke="#777" />
          <circle cx="9" cy="8.500" r="3.500" fill="#2f74b8" />
          <path d="M7 7l2.500 1L8 10.500z" fill="#6cc070" />
        </svg>
      </Tool>
      <Tool $w={18} aria-label="Структура">
        <Lines w={10} step={2} rows={[[0, 5], [2, 7], [2, 4], [4, 6], [1, 8]]} color="#777" />
      </Tool>
      <Tool $w={19} aria-label="Черновик">
        <Lines w={10} step={2} rows={[[0, 10], [0, 10], [0, 10], [0, 10], [0, 10]]} color="#666" />
      </Tool>
    </ViewButtons>
    <Zoom>
      <span>100%</span>
      <RoundButton aria-label="Мельче"><RoundIcon /></RoundButton>
      <input type="range" aria-label="Масштаб" min="0" max="100" defaultValue="50" />
      <RoundButton aria-label="Крупнее"><RoundIcon plus /></RoundButton>
    </Zoom>
  </StatusBar>
);

/* ---------- task bar ---------- */

const TaskBar = styled.footer`
  display: flex;
  align-items: center;
  height: 47px;
  padding: 0 19px 0 13px;
  background: linear-gradient(90deg, #d6ece1, #caf0ef 20%, #c9f1f3 70%, #cdf1f2);
  color: #1b1b1b;
`;

const TaskButton = styled.button`
  display: flex;
  flex: none;
  flex-direction: column;
  align-items: center;
  justify-content: center;
  position: relative;
  width: ${({ $active }) => ($active ? 34 : 44)}px;
  height: 39px;
  margin: 0 ${({ $active }) => ($active ? 5 : 0)}px;
  border-radius: 4px;
  background: ${({ $active }) => ($active ? 'rgba(255, 255, 255, 0.6)' : 'none')};
  box-shadow: ${({ $active }) => ($active ? '3px 0 0 #e2f6f6' : 'none')};

  &::after {
    content: '';
    display: ${({ $active, $open }) => ($active || $open ? 'block' : 'none')};
    position: absolute;
    bottom: 0;
    width: ${({ $active }) => ($active ? 16 : 6)}px;
    height: 3px;
    border-radius: 2px;
    background: ${({ $active }) => ($active ? '#1f7f92' : '#7d8f90')};
  }
`;

const StartButton = styled(TaskButton)`
  width: 38px;
`;

const Search = styled.label`
  display: flex;
  align-items: center;
  width: 218px;
  height: 31px;
  margin: 0 2px 0 7px;
  padding: 0 4px 0 10px;
  border: 1px solid #c3dcd9;
  border-radius: 16px;
  background: #f1faf8;

  input {
    flex: 1;
    min-width: 0;
    margin-left: 10px;
    outline: 0;
    font-size: 13px;
  }

  input::placeholder {
    color: #5d6362;
  }
`;

const Tray = styled.div`
  display: flex;
  flex: 1;
  align-items: center;
  justify-content: flex-end;
`;

const Clock = styled.div`
  width: 63px;
  line-height: 16px;
  text-align: right;
`;

const Taskbar = () => (
  <TaskBar>
    <StartButton aria-label="Пуск">
      <svg width="23" height="23" viewBox="0 0 23 23">
        <defs>
          <linearGradient id="win" x1="0" y1="0" x2="1" y2="1">
            <stop offset="0" stopColor="#4cd0fb" />
            <stop offset="1" stopColor="#0067c8" />
          </linearGradient>
        </defs>
        <path d="M1 0h10v11H0V1zM12 0h10l1 1v10H12zM0 12h11v11H1l-1-1zM12 12h11v10l-1 1H12z" fill="url(#win)" />
      </svg>
    </StartButton>
    <Search>
      <svg width="15" height="16" viewBox="0 0 15 16" fill="none" stroke="#222" strokeWidth="1.800">
        <circle cx="6.500" cy="6.500" r="5.300" />
        <path d="M10.300 10.500l4 4.300" strokeLinecap="round" />
      </svg>
      <input type="text" placeholder="Пошук" aria-label="Пошук" />
      <svg width="45" height="25" viewBox="0 0 45 25">
        <ellipse cx="22.500" cy="20" rx="22" ry="4.500" fill="#e2bd93" />
        <path d="M4 8l16-2 2 11-14 4z" fill="#eef4e6" stroke="#58755a" />
        <path d="M7 11l10-1.500M8 14l10-1.500" stroke="#b9cdb2" />
        <path d="M13 13l8-9 2.500 2-8 8.500-3.200 1z" fill="#f29c38" />
        <path d="M20.500 4L22 2.500 24.500 4.300 23 6z" fill="#e54b4b" />
        <path d="M28 12C28 2 42 2 42 12v6c0 2-1 3-3 3h-8c-2 0-3-1-3-3z" fill="#1273e8" />
        <path d="M32.500 5c0-5.500 5-5.500 5 0" fill="none" stroke="#0b4fb3" strokeWidth="1.500" />
        <path d="M30.500 13.500h9v5h-9zM32 9h6" fill="#39a0ff" stroke="#0d56c0" />
      </svg>
    </Search>
    <TaskButton aria-label="Представление задач">
      <svg width="23" height="22" viewBox="0 0 23 22">
        <rect x="0" y="5" width="18" height="17" rx="1" fill="#2c2c2c" />
        <rect x="6" y="0" width="17" height="16" rx="1" fill="#f4f4f4" />
        <rect x="6" y="5" width="12" height="11" fill="#bdbdbd" />
      </svg>
    </TaskButton>
    <TaskButton aria-label="Copilot">
      <svg width="24" height="22" viewBox="0 0 23 22" preserveAspectRatio="none">
        <defs>
          <linearGradient id="cpA" x1="0" y1="0" x2="0" y2="1">
            <stop offset="0" stopColor="#1a7fe8" />
            <stop offset="0.500" stopColor="#2fb8a0" />
            <stop offset="1" stopColor="#f3c62c" />
          </linearGradient>
          <linearGradient id="cpB" x1="1" y1="0" x2="0" y2="1">
            <stop offset="0" stopColor="#a257e8" />
            <stop offset="0.500" stopColor="#ec5b9c" />
            <stop offset="1" stopColor="#fb9a4b" />
          </linearGradient>
        </defs>
        <path d="M7 0.500h8c1.500 0 2 1 2.500 2.500l.7 2.500H14c-1.500 0-2 .7-2.500 2L9.500 14c-.5 1.500-1.500 2.500-3 2.500H3c-3 0-3.500-2-2.500-5L3 4c.7-2.500 2-3.500 4-3.500z" fill="url(#cpA)" />
        <path d="M16 21.500H8c-1.500 0-2-1-2.500-2.500l-.7-2.500H9c1.500 0 2-.7 2.500-2L13.500 8c.5-1.500 1.500-2.500 3-2.500H20c3 0 3.500 2 2.500 5L20 18c-.7 2.500-2 3.500-4 3.500z" fill="url(#cpB)" />
        <path d="M12 0.500h3c1.500 0 2 1 2.500 2.500l.7 2.500H14c-1 0-1.500.4-2 1.200z" fill="#1b48c4" />
      </svg>
    </TaskButton>
    <TaskButton $open aria-label="Проводник">
      <svg width="24" height="22" viewBox="0 0 23 22" preserveAspectRatio="none">
        <path d="M0 2c0-1 .5-1.500 1.500-1.500H8L10 3v3H0z" fill="#d99a16" />
        <path d="M0 4.500h8.500L10.500 2.500H21.500c1 0 1.500.5 1.500 1.500v16c0 1-.5 1.500-1.500 1.500h-20C.5 21.500 0 21 0 20z" fill="#fdc93c" />
        <path d="M4 21.500V16c0-1 .7-1.500 1.500-1.500h12c.8 0 1.500.5 1.500 1.500v5.500z" fill="#1a7fcb" />
        <path d="M7 18.500h9" stroke="#0d5696" strokeWidth="1.500" />
      </svg>
    </TaskButton>
    <TaskButton aria-label="Microsoft Store">
      <svg width="23" height="23" viewBox="0 0 22 23" preserveAspectRatio="none">
        <path d="M5.500 6V1.500h11V6" fill="none" stroke="#2fb2e9" strokeWidth="1.800" />
        <path d="M0 5h22v15c0 2-1 3-3 3H3c-2 0-3-1-3-3z" fill="#164a86" />
        <path d="M6.500 9h4v4h-4z" fill="#f25022" />
        <path d="M11.500 9h4v4h-4z" fill="#7fba00" />
        <path d="M6.500 14h4v4h-4z" fill="#00a4ef" />
        <path d="M11.500 14h4v4h-4z" fill="#ffb900" />
      </svg>
    </TaskButton>
    <TaskButton $active aria-label="Word">
      <WordLogo size={23} />
    </TaskButton>
    <TaskButton $open aria-label="Chrome">
      <svg width="24" height="24" viewBox="0 0 24 24">
        <circle cx="12" cy="12" r="12" fill="#fbc116" />
        <path d="M12 12L1.600 6A12 12 0 0 1 22.400 6z" fill="#e33b2e" />
        <path d="M1.600 6A12 12 0 0 0 12 24l5.200-9L12 12l-5 3z" fill="#2da94f" />
        <path d="M12 6h10.400A12 12 0 0 1 12 24l5.200-9z" fill="#fbc116" />
        <circle cx="12" cy="12" r="5.800" fill="#fff" />
        <circle cx="12" cy="12" r="4.600" fill="#2c7be5" />
      </svg>
    </TaskButton>
    <Tray>
      <Tool $w={26} aria-label="Скрытые значки">
        <svg width="10" height="6" fill="none" stroke="#1b1b1b" strokeWidth="1.400"><path d="M0.500 5.500L5 1l4.500 4.500" /></svg>
      </Tool>
      <Tool $w={38} aria-label="Обновление">
        <svg width="17" height="17" viewBox="0 0 17 17" fill="none" stroke="#222" strokeWidth="1.200">
          <path d="M1.500 7C2.500 0.500 12 -1 15 4M15.500 0.500V4.500H11.500M1 16v-4.500h4M1.500 12c1 2 3 4 6 4" />
          <circle cx="12" cy="12.500" r="4" fill="#fb9a10" stroke="none" />
        </svg>
      </Tool>
      <Tool $w={38}>УКР</Tool>
      <Tool $w={38} aria-label="Сеть">
        <svg width="15" height="12" viewBox="0 0 15 12" fill="none" stroke="#1b1b1b" strokeWidth="1.200">
          <path d="M0.500 4.500c4-4.500 10-4.500 14 0" stroke="#93b3b3" />
          <path d="M2.500 6.700c3-3.200 7-3.200 10 0M4.700 8.800c1.700-1.800 3.900-1.800 5.600 0" />
          <circle cx="7.500" cy="10.600" r="1.200" fill="#1b1b1b" stroke="none" />
        </svg>
      </Tool>
      <Tool $w={10} aria-label="Звук">
        <svg width="16" height="12" viewBox="0 0 16 12" fill="none" stroke="#1b1b1b">
          <path d="M0.500 4h2.500l3.500-3.300v10.600L3 8H0.500zM10.500 3.500l5 5M15.500 3.500l-5 5" />
        </svg>
      </Tool>
      <Tool $w={38} aria-label="Батарея">
        <svg width="16" height="10" viewBox="0 0 16 10">
          <rect x="0.600" y="0.600" width="13" height="8.800" rx="2" fill="none" stroke="#1b1b1b" strokeWidth="1.200" />
          <rect x="2.300" y="2.300" width="9.600" height="5.400" rx="0.500" fill="#1b1b1b" />
          <path d="M15 3.500v3" stroke="#1b1b1b" strokeWidth="1.600" />
        </svg>
      </Tool>
      <Clock>
        22:25
        <br />
        12.04.2025
      </Clock>
    </Tray>
  </TaskBar>
);

const App = () => (
  <Window>
    <GlobalStyle />
    <TitleRow />
    <Tabs />
    <Ribbon>
      <Clipboard />
      <FontGroup />
      <ParagraphGroup />
      <StylesGroup />
      <EditGroup />
    </Ribbon>
    <RulerBar>
      <Corner aria-label="Табуляция">
        <svg width="15" height="15"><path d="M5.500 4v6.500h5" fill="none" stroke="#333" strokeWidth="2" /></svg>
      </Corner>
      <Sheets>
        <SheetWidth />
        <HorizontalRuler />
      </Sheets>
      <ScrollTop>
        <button aria-label="Линейка">
          <svg width="12" height="11" fill="#f4f4f5" stroke="#666">
            <path d="M0.500 0.500h6v5h-6zM5.500 4.500h6v6h-6zM2 2l6 6" />
          </svg>
        </button>
      </ScrollTop>
    </RulerBar>
    <Workspace>
      <SideRuler><VerticalRuler /></SideRuler>
      <Sheets>
        <LeftColumn />
        <RightColumn />
      </Sheets>
      <Scroll />
    </Workspace>
    <Status />
    <Taskbar />
  </Window>
);

export default App;
